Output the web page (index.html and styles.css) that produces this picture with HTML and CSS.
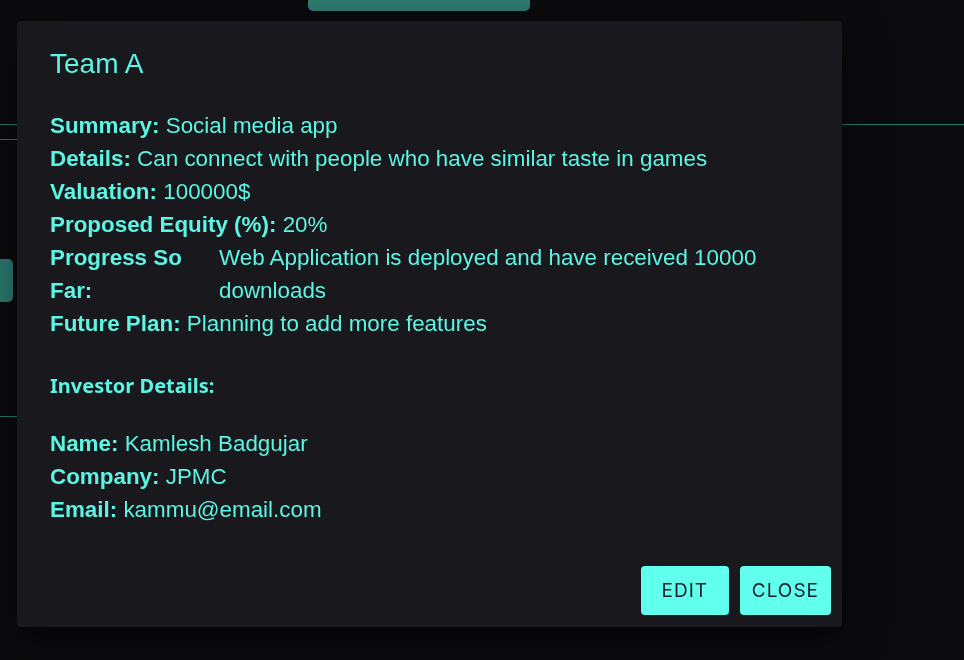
FILE: index.html
```html
<!DOCTYPE html>
<html>
<head>
<meta charset="utf-8">
<link rel="stylesheet" href="styles.css">
</head>
<body>
<div class="page">
  <div class="top-btn"></div>
  <div class="line line-a"></div>
  <div class="line line-b"></div>
  <div class="side-btn"></div>
  <div class="line line-c"></div>
</div>
<div class="overlay">
  <div class="dialog">
    <h2 class="title">Team A</h2>
    <div class="content">
      <div class="row"><b>Summary:</b> Social media app</div>
      <div class="row"><b>Details:</b> Can connect with people who have similar taste in games</div>
      <div class="row"><b>Valuation:</b> 100000$</div>
      <div class="row"><b>Proposed Equity (%):</b> 20%</div>
      <div class="row grid-row"><b>Progress So Far:</b><span>Web Application is deployed and have received 10000 downloads</span></div>
      <div class="row"><b>Future Plan:</b> Planning to add more features</div>
      <div class="section">Investor Details:</div>
      <div class="row"><b>Name:</b> Kamlesh Badgujar</div>
      <div class="row"><b>Company:</b> JPMC</div>
      <div class="row"><b>Email:</b> kammu@email.com</div>
    </div>
    <div class="actions">
      <button class="btn edit">EDIT</button>
      <button class="btn">CLOSE</button>
    </div>
  </div>
</div>
</body>
</html>
```
FILE: styles.css
```css
html, body {
  margin: 0;
  padding: 0;
  background: #0b0b0d;
  width: 964px;
  height: 660px;
  overflow: hidden;
}
.page {
  display: flex;
  flex-direction: column;
}
.top-btn {
  margin-left: 308px;
  width: 222px;
  height: 11px;
  background: #2e7a70;
  border-radius: 0 0 5px 5px;
}
.line {
  height: 1px;
  background: #1f7a6e;
}
.line-a {
  margin-top: 113px;
  width: 964px;
}
.line-b {
  margin-top: 14px;
  width: 300px;
}
.side-btn {
  margin-top: 119px;
  width: 13px;
  height: 43px;
  background: #2b7a6f;
  border-radius: 0 5px 5px 0;
}
.line-c {
  margin-top: 114px;
  width: 300px;
}
.overlay {
  position: fixed;
  inset: 0;
}
.dialog {
  position: absolute;
  left: 17px;
  top: 21px;
  width: 825px;
  height: 606px;
  box-sizing: border-box;
  background: #18181d;
  border-radius: 4px;
  box-shadow: 0 11px 15px -7px rgba(0,0,0,.3), 0 24px 38px 3px rgba(0,0,0,.2), 0 9px 46px 8px rgba(0,0,0,.18);
  display: flex;
  flex-direction: column;
  padding: 20px 11px 12px 33px;
  font-family: "Liberation Sans", Arial, sans-serif;
  color: #5df4e3;
}
.title {
  margin: 0 0 22px 0;
  font-size: 28px;
  font-weight: normal;
  line-height: 46px;
}
.content {
  font-size: 22.4px;
  line-height: 33px;
  padding-right: 22px;
  flex: 1;
}
.row b {
  font-weight: bold;
}
.grid-row {
  display: grid;
  grid-template-columns: 169px 1fr;
}
.grid-row b {
  padding-right: 20px;
}
.section {
  font-family: "Noto Sans", sans-serif;
  font-weight: bold;
  font-size: 20px;
  line-height: 33px;
  margin: 29px 0 25px 0;
}
.actions {
  display: flex;
  justify-content: flex-end;
  gap: 11px;
}
.btn {
  font-family: "Inter", "Roboto", sans-serif;
  font-size: 19px;
  font-weight: 400;
  letter-spacing: 1px;
  color: #1e1e2a;
  background: #60ffee;
  border: none;
  border-radius: 4px;
  height: 49px;
  padding: 0 12px;
  min-width: 88px;
}
```
